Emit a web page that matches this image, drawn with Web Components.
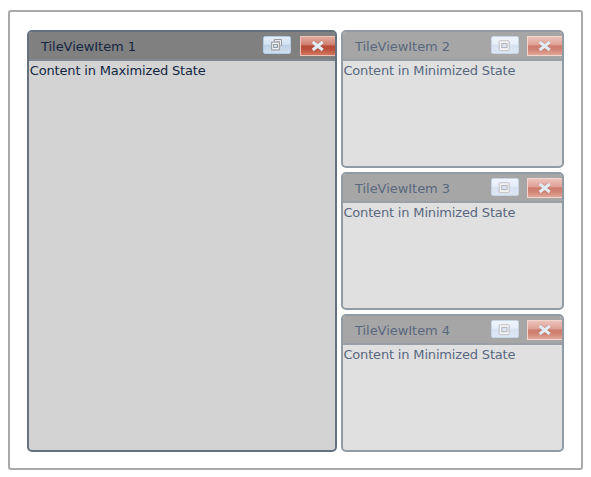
<!DOCTYPE html>
<html lang="en"><head><meta charset="utf-8"><title>Tile view</title>
<style>body{margin:0;background:#fff;font:13px/16px "DejaVu Sans",sans-serif;overflow:hidden}</style></head>
<body>
<tile-view>
<tile-item main heading="TileViewItem 1">Content in Maximized State</tile-item>
<tile-item heading="TileViewItem 2">Content in Minimized State</tile-item>
<tile-item heading="TileViewItem 3">Content in Minimized State</tile-item>
<tile-item heading="TileViewItem 4">Content in Minimized State</tile-item>
</tile-view>
<script>
class TileView extends HTMLElement{
  constructor(){super();this.attachShadow({mode:'open'}).innerHTML=`<style>
  :host{display:grid;box-sizing:border-box;width:575px;height:460px;margin:10px 0 0 8px;padding:18px 17px 16px;border:2px solid #a9a9a9;border-radius:3px;
  grid-template-columns:310px 223px;grid-template-rows:repeat(3,138px);gap:4px}
  ::slotted([main]){grid-row:1 / 4}
  </style><slot></slot>`}
}
class TileButton extends HTMLElement{
  constructor(){super();this.attachShadow({mode:'open'})}
  connectedCallback(){
    const k=this.getAttribute('kind');
    const icons={
      restore:`<svg width="28" height="18"><path d="M11 3h8v8h-8z" fill="#e6ebf1"/><path d="M11.5 6V3.5h7v6.5H17" fill="none" stroke="#999da3"/><path d="M13 5.5h3.5v2" fill="none" stroke="#b4b8be"/><rect x="8.6" y="6.1" width="7.8" height="7.8" fill="#f1f2f4" stroke="#a3a4a7" stroke-width="1.2"/><rect x="10.5" y="8.5" width="4" height="3" fill="#d2dfed" stroke="#999fa6"/></svg>`,
      maximize:`<svg width="28" height="18"><rect x="8.2" y="4.7" width="10" height="10" rx="1" fill="#f1f1f2" stroke="#c0c2c6"/><rect x="10.8" y="7.6" width="5.2" height="4" fill="#dde5f2" stroke="#b0b4bb"/></svg>`,
      close:`<svg width="35" height="19"><path d="M13 5.1L22.4 12.9M22.4 5.1L13 12.9" stroke="#a05548" stroke-opacity=".35" stroke-width="4.4"/><path d="M12.7 5L22.7 13M22.7 5L12.7 13" stroke="#e1ebf4" stroke-width="3.1"/></svg>`};
    this.shadowRoot.innerHTML=`<style>
    :host{display:block;box-sizing:border-box;flex:none;width:28px;height:18px;border:1px solid #b3cbe0;border-radius:2px;background:linear-gradient(#e2edf9 0,#d5e3f2 45%,#bdd0e4 50%,#cfdfef 100%)}
    :host([kind=maximize]){border-color:#c6d4e5;background:linear-gradient(#eff5fd 0,#e6eef9 45%,#d7e1f0 50%,#dde6f3 100%)}
    :host([kind=close]){width:35px;height:20px;border:1px solid #edc3b5;border-right:0;border-radius:0;background:linear-gradient(#e2aaa0 0,#ce7c6c 44%,#b74c37 49%,#bb523d 70%,#d37661 100%)}
    :host([kind=close][dim]){border-color:#f2d6ce;background:linear-gradient(#ebc3bc 0,#df9f94 44%,#cd7c6c 49%,#d08373 70%,#e2a698 100%)}
    svg{display:block;margin:-1px}
    :host([kind=close]) svg{margin:0 -1px}
    </style>${icons[k]}`}
}
class TileItem extends HTMLElement{
  constructor(){super();this.attachShadow({mode:'open'})}
  connectedCallback(){
    const m=this.hasAttribute('main');
    this.shadowRoot.innerHTML=`<style>
    :host{display:flex;flex-direction:column;box-sizing:border-box;overflow:hidden;border:2px solid #929aa4;border-radius:5px;background:#e0e0e0;color:#59687f}
    :host([main]){border-color:#65717e;background:#d3d3d3;color:#142641}
    header{display:flex;box-sizing:border-box;height:29px;flex:none;padding:4px 0 0 12px;background:#a6a6a6;border-bottom:2px solid #9ba0a7}
    :host([main]) header{background:#808080;border-color:#7f8791}
    .title{flex:1;padding-top:3px;white-space:nowrap;letter-spacing:-.04px}
    tile-button+tile-button{margin-left:9px}
    :host(:not([main])) tile-button+tile-button{margin-left:8px}
    .body{padding:2px 0 0 .4px;white-space:nowrap;letter-spacing:-.17px}
    :host([main]) .body{padding-left:.8px}
    </style><header><span class="title">${this.getAttribute('heading')}</span><tile-button kind="${m?'restore':'maximize'}"></tile-button><tile-button kind="close" ${m?'':'dim'}></tile-button></header><div class="body"><slot></slot></div>`}
}
customElements.define('tile-view',TileView);
customElements.define('tile-button',TileButton);
customElements.define('tile-item',TileItem);
</script></body></html>
